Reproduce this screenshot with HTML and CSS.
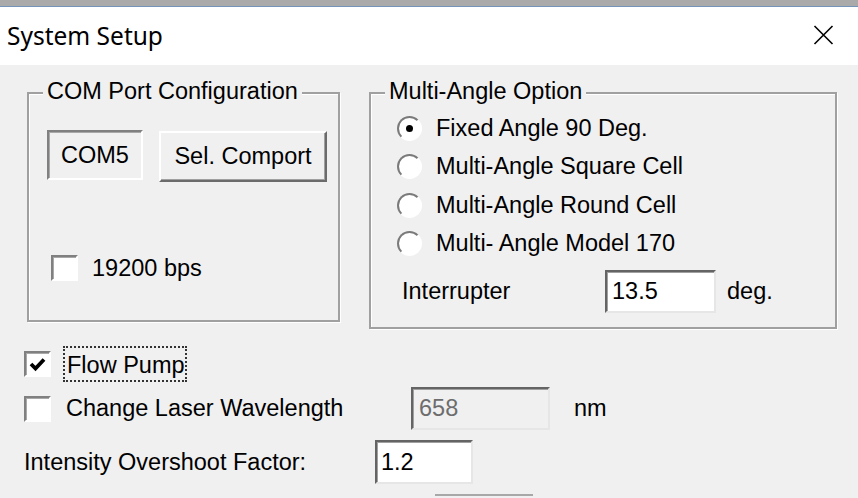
FILE: index.html
```html
<!DOCTYPE html>
<html lang="en">
<head>
  <meta charset="UTF-8">
  <title>System Setup</title>
  <link rel="stylesheet" href="styles.css">
</head>
<body>
  <div class="frame-top"></div>
  <div class="titlebar">
    <span class="title">System Setup</span>
    <svg class="close" viewBox="0 0 20 20"><path d="M1 1L19 19M19 1L1 19" stroke="#000" stroke-width="1.6" fill="none"/></svg>
  </div>
  <div class="dialog">
    <div class="groups">
      <div class="group group-com">
        <span class="group-title">COM Port Configuration</span>
        <div class="com-row">
          <div class="static-box">COM5</div>
          <button class="btn">Sel. Comport</button>
        </div>
        <div class="check check-baud"><span class="box"></span><span>19200 bps</span></div>
      </div>
      <div class="group group-angle">
        <span class="group-title">Multi-Angle Option</span>
        <ul class="radios">
          <li class="radio"><span class="dot on"></span>Fixed Angle 90 Deg.</li>
          <li class="radio"><span class="dot"></span>Multi-Angle Square Cell</li>
          <li class="radio"><span class="dot"></span>Multi-Angle Round Cell</li>
          <li class="radio"><span class="dot"></span>Multi- Angle Model 170</li>
        </ul>
        <div class="interrupter">
          <span class="interrupter-label">Interrupter</span>
          <span class="field field-angle">13.5</span>
          <span class="unit-deg">deg.</span>
        </div>
      </div>
    </div>

    <div class="row row-pump">
      <span class="box">
        <svg width="17" height="15" viewBox="0 0 17 15"><path d="M2 7L6.5 11.5L15 2.5" stroke="#000" stroke-width="3.8" fill="none"/></svg>
      </span>
      <span class="focus">Flow Pump</span>
    </div>
    <div class="row row-laser">
      <div class="check check-laser"><span class="box"></span><span>Change Laser Wavelength</span></div>
      <span class="field field-nm">658</span>
      <span class="unit-nm">nm</span>
    </div>
    <div class="row row-factor">
      <span class="factor-label">Intensity Overshoot Factor:</span>
      <span class="field field-factor">1.2</span>
    </div>
    <div class="bottom-btn"></div>
  </div>
</body>
</html>
```

FILE: styles.css
```css
body {
  margin: 0;
  height: 498px;
  overflow: hidden;
  background: #f0f0f0;
  font-family: "Liberation Sans", Arial, sans-serif;
  font-size: 23.5px;
  color: #000;
}
.frame-top {
  height: 6px;
  background: #aaaaaa;
  border-bottom: 1px solid #7394b8;
}
.titlebar {
  height: 58px;
  background: #fff;
  display: flex;
  align-items: center;
  justify-content: space-between;
  padding: 0 24px 0 7px;
}
.title {
  font-family: "Noto Sans", "Open Sans", sans-serif;
  font-size: 24.5px;
  line-height: 1;
  padding-top: 1px;
}
.close {
  width: 21px;
  height: 20px;
  margin-top: -3px;
}
.dialog {
  padding-left: 24px;
}
.groups {
  display: flex;
  align-items: flex-start;
  gap: 29px;
  margin: 27px 0 0 3px;
}
.group {
  position: relative;
  box-sizing: border-box;
  border: 2px solid #a0a0a0;
  box-shadow: inset 1px 1px #fff, 1px 1px #fff;
}
.group-com {
  width: 313px;
  height: 230px;
  padding: 36px 0 0 18px;
}
.group-angle {
  width: 468px;
  height: 237px;
  padding: 15px 0 0 26px;
}
.group-title {
  position: absolute;
  top: -16px;
  left: 14px;
  padding: 0 4px;
  background: #f0f0f0;
  white-space: nowrap;
}
.com-row {
  display: flex;
  align-items: flex-start;
  gap: 16px;
}
.static-box {
  width: 96px;
  height: 50px;
  box-sizing: border-box;
  border: 2px solid;
  border-color: #808080 #fff #fff #808080;
  box-shadow: inset 1px 1px #a8a8a8;
  display: flex;
  align-items: center;
  justify-content: center;
}
.btn {
  font: inherit;
  color: #000;
  width: 168px;
  height: 51px;
  margin-top: 1px;
  padding: 0;
  box-sizing: border-box;
  background: #f0f0f0;
  border: 2px solid;
  border-color: #fff #6b6b6b #6b6b6b #fff;
  box-shadow: inset -1px -1px #a0a0a0;
}
.check {
  display: flex;
  align-items: center;
  gap: 14px;
}
.check-baud {
  height: 26px;
  margin: 73px 0 0 4px;
}
.box {
  flex: none;
  width: 27px;
  height: 26px;
  box-sizing: border-box;
  border: 2px solid;
  border-color: #808080 #fff #fff #808080;
  box-shadow: inset 1px 1px #a8a8a8;
  background: #fff;
  display: flex;
  align-items: center;
  justify-content: center;
}
.radios {
  list-style: none;
  margin: 0;
  padding: 0;
}
.radio {
  height: 38.5px;
  display: flex;
  align-items: center;
  gap: 14px;
}
.dot {
  flex: none;
  width: 25px;
  height: 25px;
  box-sizing: border-box;
  border-radius: 50%;
  border: 2px solid;
  border-color: #7a7a7a #fff #fff #7a7a7a;
  background: #fff;
  display: flex;
  align-items: center;
  justify-content: center;
}
.dot.on::after {
  content: "";
  width: 7px;
  height: 7px;
  border-radius: 50%;
  background: #000;
}
.interrupter {
  display: flex;
  align-items: center;
  height: 43px;
  margin: 7px 0 0 5px;
}
.interrupter-label {
  width: 203px;
}
.field {
  box-sizing: border-box;
  border: 2px solid;
  border-color: #646464 #e6e6e6 #e6e6e6 #646464;
  box-shadow: inset 1px 1px #a0a0a0;
  background: #fff;
  display: flex;
  align-items: center;
}
.field-angle {
  width: 111px;
  height: 43px;
  padding-left: 5px;
}
.unit-deg {
  margin-left: 11px;
}
.row {
  display: flex;
  align-items: center;
}
.row-pump {
  height: 36px;
  margin-top: 17px;
}
.focus {
  height: 36px;
  box-sizing: border-box;
  margin-left: 12px;
  padding: 2px 0 0 2px;
  border: 2px dotted #333;
  display: flex;
  align-items: center;
}
.row-laser {
  height: 43px;
  margin-top: 5px;
}
.check-laser {
  width: 387px;
  gap: 15px;
}
.field-nm {
  width: 139px;
  height: 43px;
  padding-left: 6px;
  background: #f0f0f0;
  color: #6d6d6d;
}
.unit-nm {
  margin-left: 24px;
}
.row-factor {
  height: 44px;
  margin-top: 10px;
}
.factor-label {
  width: 351px;
}
.field-factor {
  width: 98px;
  height: 44px;
  padding-left: 4px;
}
.bottom-btn {
  width: 98px;
  height: 4px;
  margin: 10px 0 0 411px;
  box-sizing: border-box;
  border-top: 2px solid #a8a8a8;
}
```
